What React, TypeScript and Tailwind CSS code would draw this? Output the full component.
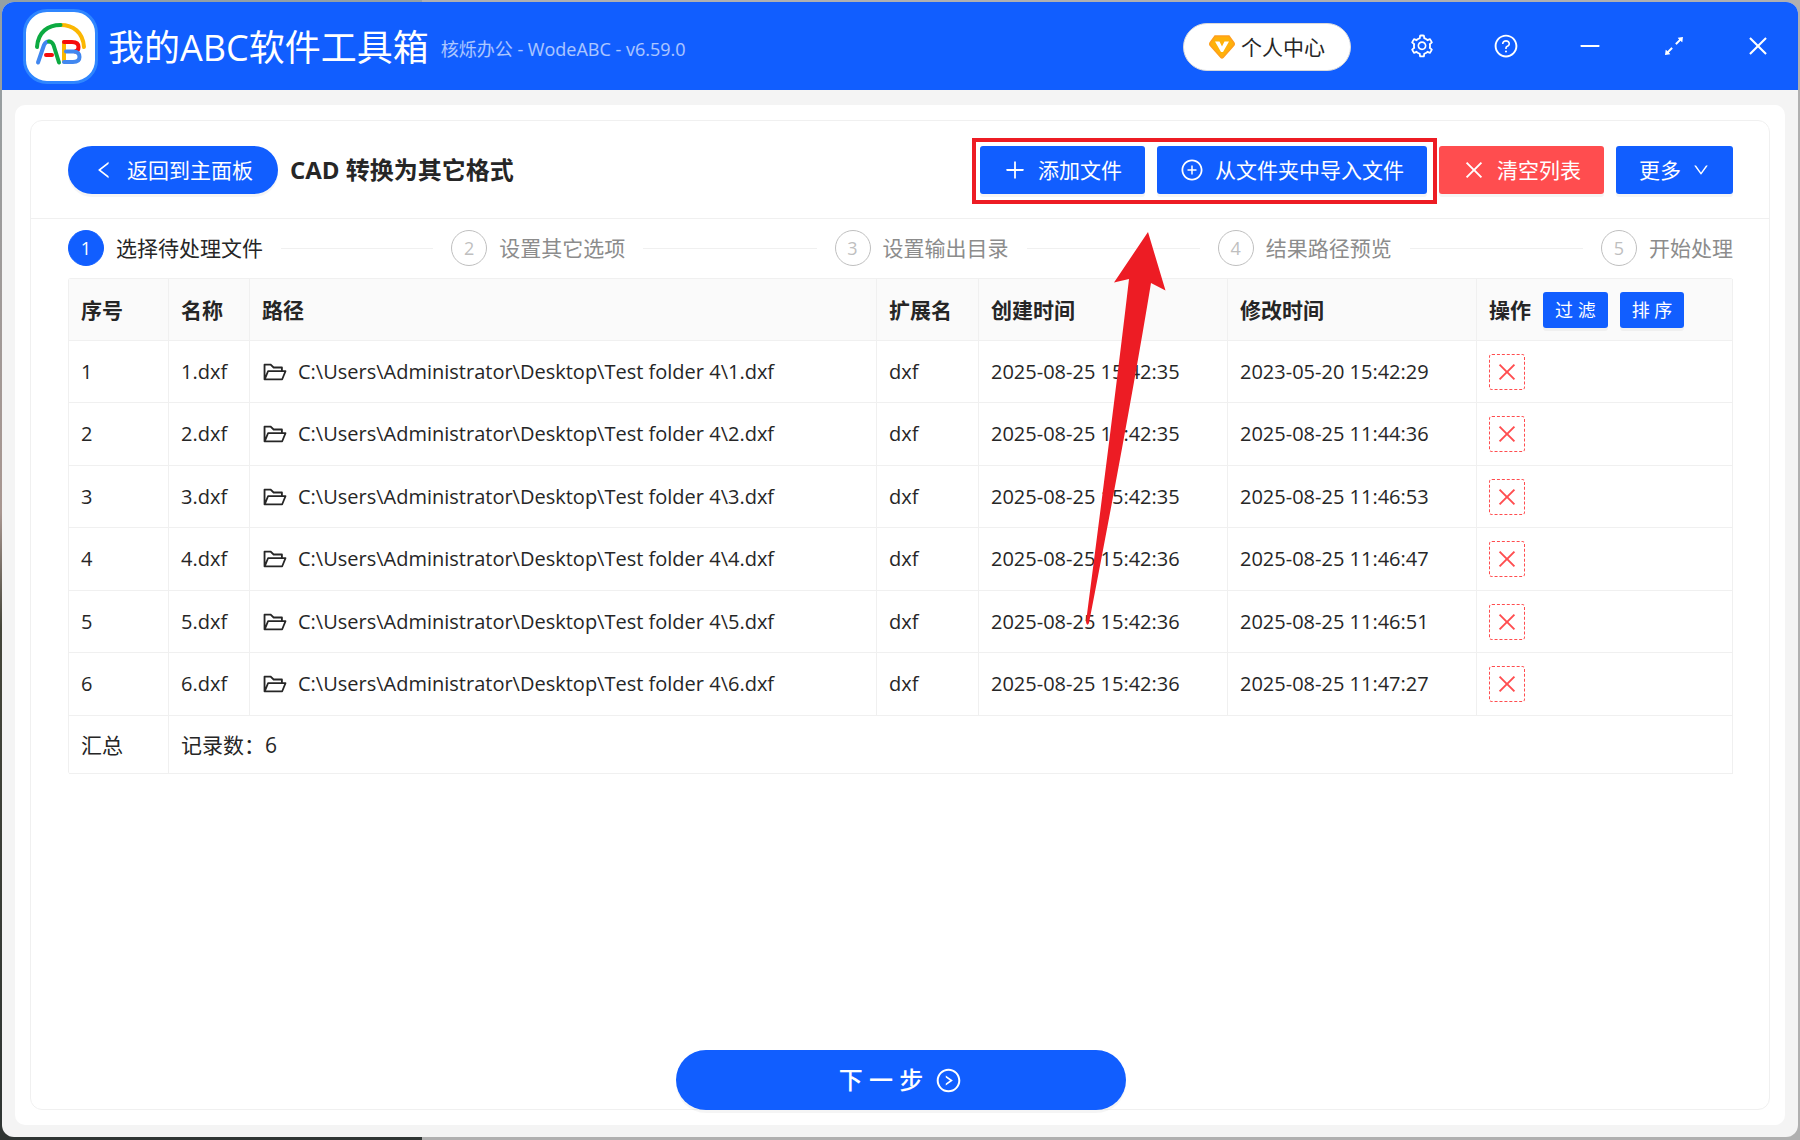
import {
  AiOutlineArrowsAlt,
  AiOutlineClose,
  AiOutlineDown,
  AiOutlineFolderOpen,
  AiOutlineLeft,
  AiOutlineMinus,
  AiOutlinePlus,
  AiOutlinePlusCircle,
  AiOutlineQuestionCircle,
  AiOutlineRightCircle,
  AiOutlineSetting,
} from "react-icons/ai";

const steps = ["选择待处理文件", "设置其它选项", "设置输出目录", "结果路径预览", "开始处理"];

const folder = "C:\\Users\\Administrator\\Desktop\\Test folder 4\\";

const files = [
  { id: 1, name: "1.dxf", created: "2025-08-25 15:42:35", modified: "2023-05-20 15:42:29" },
  { id: 2, name: "2.dxf", created: "2025-08-25 15:42:35", modified: "2025-08-25 11:44:36" },
  { id: 3, name: "3.dxf", created: "2025-08-25 15:42:35", modified: "2025-08-25 11:46:53" },
  { id: 4, name: "4.dxf", created: "2025-08-25 15:42:36", modified: "2025-08-25 11:46:47" },
  { id: 5, name: "5.dxf", created: "2025-08-25 15:42:36", modified: "2025-08-25 11:46:51" },
  { id: 6, name: "6.dxf", created: "2025-08-25 15:42:36", modified: "2025-08-25 11:47:27" },
];

const toolButton =
  "flex h-12 items-center justify-center gap-[11px] rounded-[3px] px-[23px] text-white shadow-[0_3px_0_rgba(0,0,0,0.04)]";
const cell = "border-b border-r border-[#f0f0f0] px-3 text-left";

const Logo: React.FC = () => (
  <svg
    viewBox="0 0 69 69"
    className="size-[75px] rounded-[24px] border-[3px] border-[#2f86ff] bg-white"
    fill="none"
    strokeWidth="4"
    strokeLinecap="round"
    strokeLinejoin="round"
    aria-hidden="true"
  >
    {/* Rainbow arc */}
    <path d="M58 35 C57 20 47 13 34.500 13" stroke="#fbb702" />
    <path d="M11 35 C12 20 22 13 34.500 13" stroke="#0caa41" />
    {/* A */}
    <path d="M12 50.500 L18 33 Q19.500 29.500 23 29.500" stroke="#4187f0" />
    <path d="M23 29.500 Q26 29.500 27.500 33 L33 50.500" stroke="#0caa41" />
    <path d="M20 43 H26" stroke="#f60d0d" />
    {/* B */}
    <path d="M38 30 V49.500" stroke="#fbb702" />
    <path d="M38 30 H46 Q52.500 30 52.500 35 Q52.500 39 49 39.500" stroke="#f60d0d" />
    <path d="M40 39.500 H48 Q53.500 40 53.500 45 Q53.500 50 47 50 H38" stroke="#4187f0" />
  </svg>
);

const Diamond: React.FC = () => (
  <svg viewBox="0 0 26 24" className="h-6 w-[26px] shrink-0" aria-hidden="true">
    <path
      d="M6 1 H20 L25 8 Q25.500 9 25 10 L14 22.500 Q13 23.500 12 22.500 L1 10 Q0.500 9 1 8 Z"
      fill="#ffb10a"
      stroke="#ff9f1c"
      strokeWidth="1.500"
    />
    <path d="M6 6.500 H10.500 L13 11.500 L15.500 6.500 H20 L14 17 H12 Z" fill="#fff" />
  </svg>
);

const TitleBar: React.FC = () => (
  <header className="flex h-[88px] items-center bg-[#115eff] pl-[21px] pr-[27px] text-white">
    <Logo />
    <div className="ml-2.5 mt-1 flex items-center gap-3">
      <h1 className="text-4xl">我的ABC软件工具箱</h1>
      <span className="mt-0.5 text-lg text-white/65">核烁办公 - WodeABC - v6.59.0</span>
    </div>
    <div className="ml-auto flex items-center gap-[58px]">
      <button className="mt-0.5 flex h-12 items-center gap-1.5 rounded-full border border-[#d9d9d9] bg-white px-[25px] text-[21px] text-[#262626]">
        <Diamond />
        个人中心
      </button>
      <button aria-label="设置"><AiOutlineSetting size={26} /></button>
      <button aria-label="帮助"><AiOutlineQuestionCircle size={26} /></button>
      <button aria-label="最小化"><AiOutlineMinus size={26} /></button>
      <button aria-label="最大化"><AiOutlineArrowsAlt size={26} /></button>
      <button aria-label="关闭"><AiOutlineClose size={26} /></button>
    </div>
  </header>
);

// Red frame and arrow that call out the two import buttons
const Callout: React.FC = () => (
  <>
    <div className="pointer-events-none absolute -bottom-2.5 -left-2 -right-2.5 -top-2 border-4 border-[#ed1c24]" />
    <svg
      viewBox="0 0 80 396"
      className="pointer-events-none absolute left-[106px] top-[85px] z-10 h-[396px] w-20"
      aria-hidden="true"
    >
      <path d="M62 1 L79.500 59.500 L65 52 Q44 180 3 392 Q1 396 0 391 Q30 160 43 48 L28 51.500 Z" fill="#ed1c24" />
    </svg>
  </>
);

const Toolbar: React.FC = () => (
  <div className="flex items-center border-b border-[#f0f0f0] pb-6 pl-[37px] pr-9 pt-[25px]">
    <button className="flex h-12 items-center gap-3 rounded-full bg-[#115eff] px-[25px] text-white shadow-[0_3px_0_rgba(0,0,0,0.04)]">
      <AiOutlineLeft size={22} />
      返回到主面板
    </button>
    <h2 className="ml-3 text-2xl font-bold">CAD 转换为其它格式</h2>
    <div className="ml-auto flex gap-3">
      <div className="relative flex gap-3">
        <button className={`${toolButton} bg-[#115eff]`}>
          <AiOutlinePlus size={24} />
          添加文件
        </button>
        <button className={`${toolButton} bg-[#115eff]`}>
          <AiOutlinePlusCircle size={24} />
          从文件夹中导入文件
        </button>
        <Callout />
      </div>
      <button className={`${toolButton} bg-[#ff4d4f]`}>
        <AiOutlineClose size={24} />
        清空列表
      </button>
      <button className={`${toolButton} bg-[#115eff]`}>
        更多
        <AiOutlineDown size={18} />
      </button>
    </div>
  </div>
);

const Steps: React.FC = () => (
  <ol className="flex pb-3 pt-[11px]">
    {steps.map((label, index) => (
      <li
        key={label}
        className={`flex items-center ${index > 0 ? "pl-[18px]" : ""} ${index < steps.length - 1 ? "flex-1" : ""}`}
      >
        <span
          className={`mr-3 flex size-9 shrink-0 items-center justify-center rounded-full border text-lg ${
            index === 0 ? "border-[#115eff] bg-[#115eff] text-white" : "border-[#bfbfbf] text-[#bfbfbf]"
          }`}
        >
          {index + 1}
        </span>
        <span className={`whitespace-nowrap ${index === 0 ? "" : "text-[#8c8c8c]"}`}>{label}</span>
        {index < steps.length - 1 && <span className="ml-[18px] h-px flex-1 bg-[#f0f0f0]" />}
      </li>
    ))}
  </ol>
);

const FileTable: React.FC = () => (
  <table className="w-full table-fixed border-separate border-spacing-0 rounded-[3px] border-l border-t border-[#f0f0f0]">
    <colgroup>
      <col className="w-[100px]" />
      <col className="w-[81px]" />
      <col />
      <col className="w-[102px]" />
      <col className="w-[249px]" />
      <col className="w-[249px]" />
      <col className="w-[256px]" />
    </colgroup>
    <thead className="bg-[#fafafa]">
      <tr className="h-[62px]">
        {["序号", "名称", "路径", "扩展名", "创建时间", "修改时间"].map((title) => (
          <th key={title} className={cell}>{title}</th>
        ))}
        <th className={cell}>
          <div className="flex items-center gap-3">
            操作
            {["过 滤", "排 序"].map((text) => (
              <button
                key={text}
                className="h-9 rounded-[3px] bg-[#115eff] px-3 text-lg font-normal text-white shadow-[0_3px_0_rgba(0,0,0,0.04)]"
              >
                {text}
              </button>
            ))}
          </div>
        </th>
      </tr>
    </thead>
    <tbody className="text-xl leading-8">
      {files.map((file) => (
        <tr key={file.id} className="odd:h-[62px] even:h-[63px]">
          <td className={cell}>{file.id}</td>
          <td className={cell}>{file.name}</td>
          <td className={cell}>
            <div className="flex items-center gap-2.5">
              <AiOutlineFolderOpen size={26} />
              {`${folder}${file.name}`}
            </div>
          </td>
          <td className={cell}>dxf</td>
          <td className={cell}>{file.created}</td>
          <td className={cell}>{file.modified}</td>
          <td className={cell}>
            <button
              aria-label={`移除 ${file.name}`}
              className="flex size-9 items-center justify-center rounded-[3px] border border-dashed border-[#ff4d4f] text-[#ff4d4f]"
            >
              <AiOutlineClose size={24} />
            </button>
          </td>
        </tr>
      ))}
    </tbody>
    <tfoot>
      <tr className="h-[58px]">
        <td className={cell}>汇总</td>
        <td className={cell} colSpan={6}>记录数：6</td>
      </tr>
    </tfoot>
  </table>
);

const App: React.FC = () => {
  return (
    <div className="flex min-h-screen flex-col bg-[linear-gradient(to_right,transparent_422px,#b0b0b0_422px),linear-gradient(to_bottom,#94a0a4,#a89690_45%,#45463a_55%,#2f3533)] px-0.5 pb-[3px] pt-0.5 font-['Open_Sans','Noto_Sans_CJK_SC',sans-serif] text-[21px] leading-8 text-[#262626]">
      <div className="flex flex-1 flex-col overflow-hidden rounded-xl bg-[#f4f4f4]">
        <TitleBar />
        <main className="mx-[13px] mb-3 mt-[15px] flex flex-1 flex-col rounded-[10px] bg-white p-[15px]">
          <section className="flex flex-1 flex-col rounded-xl border border-[#f0f0f0]">
            <Toolbar />
            <div className="flex flex-1 flex-col pl-[37px] pr-9">
              <Steps />
              <FileTable />
              <button className="-mb-px mt-auto flex h-[60px] w-[450px] items-center justify-center gap-3 self-center rounded-full bg-[#115eff] text-2xl font-medium text-white shadow-[0_3px_0_rgba(0,0,0,0.04)]">
                下 一 步
                <AiOutlineRightCircle size={27} />
              </button>
            </div>
          </section>
        </main>
      </div>
    </div>
  );
};

export default App;
